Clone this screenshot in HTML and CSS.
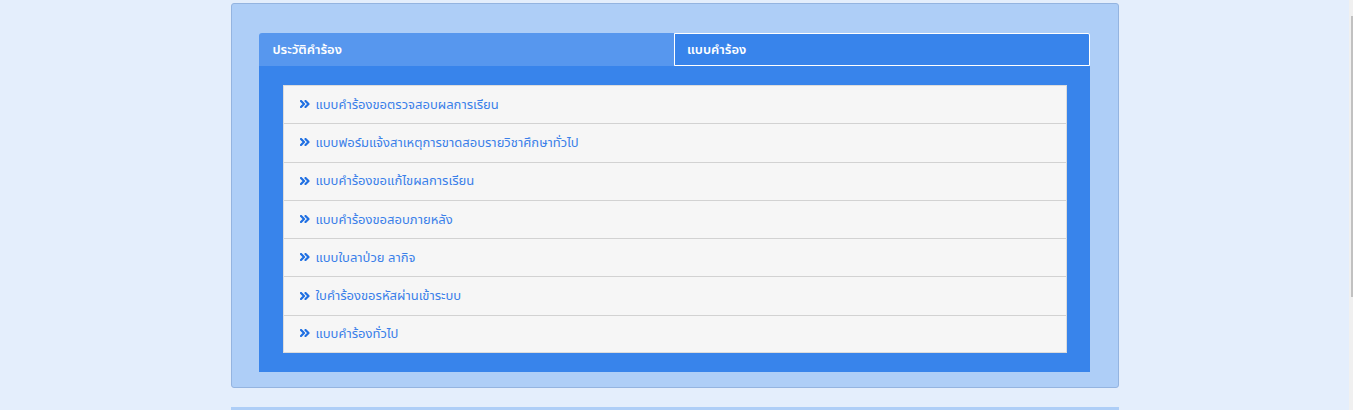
FILE: index.html
```html
<!DOCTYPE html>
<html lang="th">
<head>
<meta charset="utf-8">
<title>แบบคำร้อง</title>
<link rel="stylesheet" href="styles.css">
</head>
<body>
<div class="page">
  <div class="container">
    <div class="panel">
      <div class="tabs">
        <div class="tab tab-inactive">ประวัติคำร้อง</div>
        <div class="tab tab-active">แบบคำร้อง</div>
      </div>
      <div class="tab-body">
        <ul class="list">
          <li class="item"><svg class="chev" viewBox="0 0 10 8"><path d="M1 1l3 3-3 3M5.5 1l3 3-3 3"/></svg><a href="#">แบบคำร้องขอตรวจสอบผลการเรียน</a></li>
          <li class="item"><svg class="chev" viewBox="0 0 10 8"><path d="M1 1l3 3-3 3M5.5 1l3 3-3 3"/></svg><a href="#">แบบฟอร์มแจ้งสาเหตุการขาดสอบรายวิชาศึกษาทั่วไป</a></li>
          <li class="item"><svg class="chev" viewBox="0 0 10 8"><path d="M1 1l3 3-3 3M5.5 1l3 3-3 3"/></svg><a href="#">แบบคำร้องขอแก้ไขผลการเรียน</a></li>
          <li class="item"><svg class="chev" viewBox="0 0 10 8"><path d="M1 1l3 3-3 3M5.5 1l3 3-3 3"/></svg><a href="#">แบบคำร้องขอสอบภายหลัง</a></li>
          <li class="item"><svg class="chev" viewBox="0 0 10 8"><path d="M1 1l3 3-3 3M5.5 1l3 3-3 3"/></svg><a href="#">แบบใบลาป่วย ลากิจ</a></li>
          <li class="item"><svg class="chev" viewBox="0 0 10 8"><path d="M1 1l3 3-3 3M5.5 1l3 3-3 3"/></svg><a href="#">ใบคำร้องขอรหัสผ่านเข้าระบบ</a></li>
          <li class="item"><svg class="chev" viewBox="0 0 10 8"><path d="M1 1l3 3-3 3M5.5 1l3 3-3 3"/></svg><a href="#">แบบคำร้องทั่วไป</a></li>
        </ul>
      </div>
    </div>
    <div class="panel-next"></div>
  </div>
  <div class="scrollbar"><div class="thumb"></div></div>
</div>
</body>
</html>
```
FILE: styles.css
```css
html, body {
  margin: 0;
  padding: 0;
}
body {
  background: #e4eefc;
  font-family: "Noto Sans Thai", "Noto Sans", "DejaVu Sans", sans-serif;
  font-size: 13px;
}
.page {
  padding-right: 4px;
}
.container {
  width: 888px;
  margin: 0 auto;
  padding-top: 3px;
}
.panel {
  background: #aecef7;
  border: 1px solid #94b4e0;
  border-radius: 3px;
  padding: 29px 28px 15px 27px;
}
.tabs {
  display: flex;
  height: 33px;
}
.tab {
  flex: 1;
  display: flex;
  align-items: center;
  color: #fff;
  font-weight: 600;
  font-size: 13px;
  box-sizing: border-box;
}
.tab-inactive {
  background: #5797ee;
  border-top-left-radius: 3px;
  padding-left: 14px;
}
.tab-active {
  background: #3884eb;
  border: 1px solid #fff;
  border-top-right-radius: 2px;
  padding-left: 12px;
}
.tab-body {
  background: #3884eb;
  padding: 19px 23px 19px 24px;
}
.list {
  list-style: none;
  margin: 0;
  padding: 0;
  background: #f6f6f6;
  border: 1px solid #dcdcdc;
}
.item {
  height: 37.3px;
  display: flex;
  align-items: center;
  padding-left: 16px;
  border-bottom: 1px solid #d2d2d2;
}
.item:last-child {
  border-bottom: none;
  height: 36.2px;
}
.chev {
  width: 10px;
  height: 8px;
  margin-right: 6px;
  margin-top: -1px;
  flex: none;
}
.chev path {
  fill: none;
  stroke: #1f6fe2;
  stroke-width: 2.2;
  stroke-linecap: round;
  stroke-linejoin: round;
}
.item a {
  color: #3a7fe9;
  text-decoration: none;
}
.panel-next {
  margin-top: 19px;
  height: 190px;
  border-top: 3px solid #aecef7;
}
.scrollbar {
  position: fixed;
  top: 0;
  right: 0;
  width: 4px;
  height: 100%;
  background: #f0f0f0;
}
.thumb {
  position: absolute;
  top: 16px;
  right: 0;
  width: 2.5px;
  height: 281px;
  background: #c1c1c1;
}
```
